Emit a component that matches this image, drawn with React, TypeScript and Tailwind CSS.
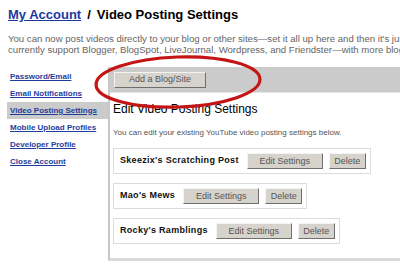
const sideLinks = [
  "Password/Email",
  "Email Notifications",
  "Video Posting Settings",
  "Mobile Upload Profiles",
  "Developer Profile",
  "Close Account",
];

const blogs = ["Skeezix's Scratching Post", "Mao's Mews", "Rocky's Ramblings"];

function GrayButton({ label, className = "" }: { label: string; className?: string }) {
  return (
    <button
      className={
        "h-[16px] bg-[#d6d3cc] border border-t-[#f4f4f4] border-l-[#f4f4f4] border-r-[#6e6e6e] border-b-[#6e6e6e] text-[9px] leading-none text-[#555] " +
        className
      }
    >
      {label}
    </button>
  );
}

export default function App() {
  return (
    <div className="relative w-[400px] h-[267px] overflow-hidden bg-white font-['Liberation_Sans',Arial,sans-serif]">
      <div className="pl-[8px] pt-[7px]">
        <h1 className="text-[13px] font-bold leading-[15px] text-black whitespace-nowrap">
          <a className="text-[#1b3aa0] underline">My Account</a>
          <span className="mx-[6px]">/</span>
          Video Posting Settings
        </h1>
        <div className="mt-[11px] text-[9.6px] leading-[11px] text-[#666] whitespace-nowrap">
          <div>You can now post videos directly to your blog or other sites—set it all up here and then it's just one click to post.</div>
          <div>currently support Blogger, BlogSpot, LiveJournal, Wordpress, and Friendster—with more blogging services coming soon.</div>
        </div>
      </div>

      <div className="flex mt-[12px]">
        {/* sidebar */}
        <div className="w-[108px] shrink-0 pl-[7px] flex flex-col">
          {sideLinks.map((l, i) => (
            <a
              key={l}
              className={
                "h-[17px] flex items-center pl-[3px] text-[8px] font-bold text-[#1f3e9a] underline whitespace-nowrap " +
                (i === 0 ? "mt-[1px] " : "") +
                (i === 2 ? "bg-[#cbcbcb]" : "")
              }
            >
              {l}
            </a>
          ))}
        </div>

        {/* panel */}
        <div className="flex-1 border-l-2 border-b-[3px] border-l-[#c8c8c8] border-b-[#d8d8d8] pb-[14px]">
          <div className="h-[26px] bg-[#cbcbcb] border-b border-[#e4e4e4] flex items-center pl-[4px]">
            <GrayButton label="Add a Blog/Site" className="w-[92px]" />
          </div>
          <div className="pl-[3px]">
            <h2 className="mt-[9px] text-[12px] leading-[14px] text-black whitespace-nowrap">Edit Video Posting Settings</h2>
            <p className="mt-[12px] text-[8px] leading-[10px] text-[#555] whitespace-nowrap">
              You can edit your existing YouTube video posting settings below.
            </p>
            <div className="mt-[10px] flex flex-col items-start gap-[9px]">
              {blogs.map((b) => (
                <div
                  key={b}
                  className="h-[26px] flex items-center border border-[#dcdcdc] pl-[6px] pr-[4px]"
                >
                  <span className="text-[9px] font-bold tracking-[0.3px] text-[#111] whitespace-nowrap">{b}</span>
                  <GrayButton label="Edit Settings" className="ml-[8px] w-[76px]" />
                  <GrayButton label="Delete" className="ml-[6px] w-[37px]" />
                </div>
              ))}
            </div>
          </div>
        </div>
      </div>

      {/* red hand-drawn circle */}
      <svg className="absolute left-0 top-0 pointer-events-none" width="400" height="267">
        <ellipse cx="178" cy="82" rx="82" ry="25" fill="none" stroke="#c41414" strokeWidth="3.2" transform="rotate(-2 178 82)" />
      </svg>
    </div>
  );
}
